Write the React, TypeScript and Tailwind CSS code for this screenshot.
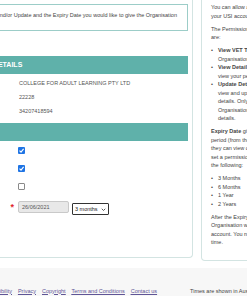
import React from "react";

const CheckBox = ({ checked }: { checked: boolean }) =>
  checked ? (
    <span className="flex h-[7px] w-[7px] items-center justify-center rounded-[1px] bg-[#1f74e4]">
      <svg viewBox="0 0 10 10" className="h-[7px] w-[7px]">
        <path d="M2.2 5.2 L4.3 7.3 L8 2.8" stroke="white" strokeWidth="1.6" fill="none" />
      </svg>
    </span>
  ) : (
    <span className="h-[7px] w-[7px] rounded-[1px] border border-[#8a8a8a] bg-white" />
  );

const Bullet = ({ children }: { children: React.ReactNode }) => (
  <li className="flex">
    <span className="w-[7px] shrink-0">•</span>
    <div>{children}</div>
  </li>
);

const L = ({ children }: { children: React.ReactNode }) => (
  <div className="whitespace-nowrap">{children}</div>
);

export default function App() {
  return (
    <div className="relative h-[296px] w-[247px] overflow-hidden bg-white font-['Liberation_Sans',Arial,sans-serif] text-[5.5px] leading-[8.5px] text-[#444]">
      <div className="flex items-start">
        {/* Left panel */}
        <div className="ml-[-98px] w-[291px] shrink-0 rounded-b-[4px] border-x border-b border-[#d3e4e2] px-[4px] pb-[42px] pt-[4px]">
          <div className="border border-[#9ccdc8] px-[8px] pb-[10px] pt-[6px]">
            <p className="whitespace-nowrap">
              Select the Permission(s) to View and/or Update and the Expiry Date you would like to give the Organisation
            </p>
          </div>

          <div className="mt-[25.5px] flex h-[18px] items-center bg-[#5fb1aa] pl-[30px] text-[7px] font-bold text-white">
            ORGANISATION DETAILS
          </div>

          <div className="mt-[2px]">
            {[
              ["Organisation Name", "COLLEGE FOR ADULT LEARNING PTY LTD"],
              ["Organisation Code", "22228"],
              ["ABN", "34207418594"],
            ].map(([k, v]) => (
              <div key={k} className="flex h-[14px] items-center">
                <div className="w-[112px] shrink-0 pl-[8px] font-bold">{k}</div>
                <div className="whitespace-nowrap text-[#555]">{v}</div>
              </div>
            ))}
          </div>

          <div className="mt-[5px] flex h-[18px] items-center bg-[#5fb1aa] pl-[30px] text-[7px] font-bold text-white">
            PERMISSIONS
          </div>

          {[
            ["View VET Transcript", true],
            ["View Details", true],
            ["Update Details", false],
          ].map(([k, c]) => (
            <div key={k as string} className="flex h-[18px] items-center">
              <div className="w-[111px] shrink-0 pl-[8px] font-bold">{k as string}</div>
              <CheckBox checked={c as boolean} />
            </div>
          ))}

          <div className="flex items-start pt-[6px]">
            <div className="flex w-[111px] shrink-0 items-center justify-between pl-[8px] pr-[4px] pt-[2px] font-bold">
              <span>Expiry Date</span>
              <span className="text-[9px] leading-[8px] text-[#e0262b]">*</span>
            </div>
            <div className="flex h-[12px] w-[51px] items-center rounded-[2px] border border-[#c9c9c9] bg-[#e8e8e8] pl-[3px] text-[5.5px] text-[#555]">
              26/06/2021
            </div>
            <div className="ml-[3px] mt-[2px] flex h-[12px] w-[37px] items-center justify-between rounded-[1px] border border-[#333] bg-white pl-[2px] pr-[2px] text-[5.5px] text-[#222]">
              <span>3 months</span>
              <svg viewBox="0 0 10 10" className="h-[5px] w-[5px]">
                <path d="M1.5 3.5 L5 7 L8.5 3.5" stroke="#333" strokeWidth="1.6" fill="none" />
              </svg>
            </div>
          </div>
        </div>

        {/* Right panel */}
        <div className="ml-[8px] w-[140px] shrink-0 rounded-b-[4px] border-x border-b border-[#d3e4e2] pb-[13.5px] pl-[9px] pt-[3px]">
          <div className="mb-[4.5px]">
            <L>You can allow an Organisation to access</L>
            <L>your USI account by giving them permission.</L>
          </div>
          <div className="mb-[4.5px]">
            <L>The Permissions you can give an Organisation</L>
            <L>are:</L>
          </div>
          <ul className="mb-[4.5px]">
            <Bullet>
              <L><b>View VET Transcript</b> - allows the</L>
              <L>Organisation to view your transcript.</L>
            </Bullet>
            <Bullet>
              <L><b>View Details</b> - allows the Organisation to</L>
              <L>view your personal details.</L>
            </Bullet>
            <Bullet>
              <L><b>Update Details</b> - allows the Organisation to</L>
              <L>view and update your personal</L>
              <L>details. Only give this permission if the</L>
              <L>Organisation needs to update your</L>
              <L>details.</L>
            </Bullet>
          </ul>
          <div className="mb-[4.5px]">
            <L><b>Expiry Date</b> gives the Organisation a</L>
            <L>period (from the date permission is given) that</L>
            <L>they can view or update your account. You can</L>
            <L>set a permission to expire after one of</L>
            <L>the following:</L>
          </div>
          <ul className="mb-[4.5px]">
            <Bullet>3 Months</Bullet>
            <Bullet>6 Months</Bullet>
            <Bullet>1 Year</Bullet>
            <Bullet>2 Years</Bullet>
          </ul>
          <div>
            <L>After the Expiry Date has passed, the</L>
            <L>Organisation will no longer have access to your</L>
            <L>account. You may remove permissions at any</L>
            <L>time.</L>
          </div>
        </div>
      </div>

      {/* Footer */}
      <div className="mt-[7px] h-[40px] bg-[#f7f7f7] pt-[18.5px]">
        <div className="ml-[-18px] flex items-center whitespace-nowrap">
          <div className="flex gap-[6px] text-[#5f5596] underline">
            <a>Accessibility</a>
            <a>Privacy</a>
            <a>Copyright</a>
            <a>Terms and Conditions</a>
            <a>Contact us</a>
          </div>
          <span className="ml-[33px] text-[#444]">Times are shown in Australian Eastern Standard Time</span>
        </div>
      </div>
    </div>
  );
}
